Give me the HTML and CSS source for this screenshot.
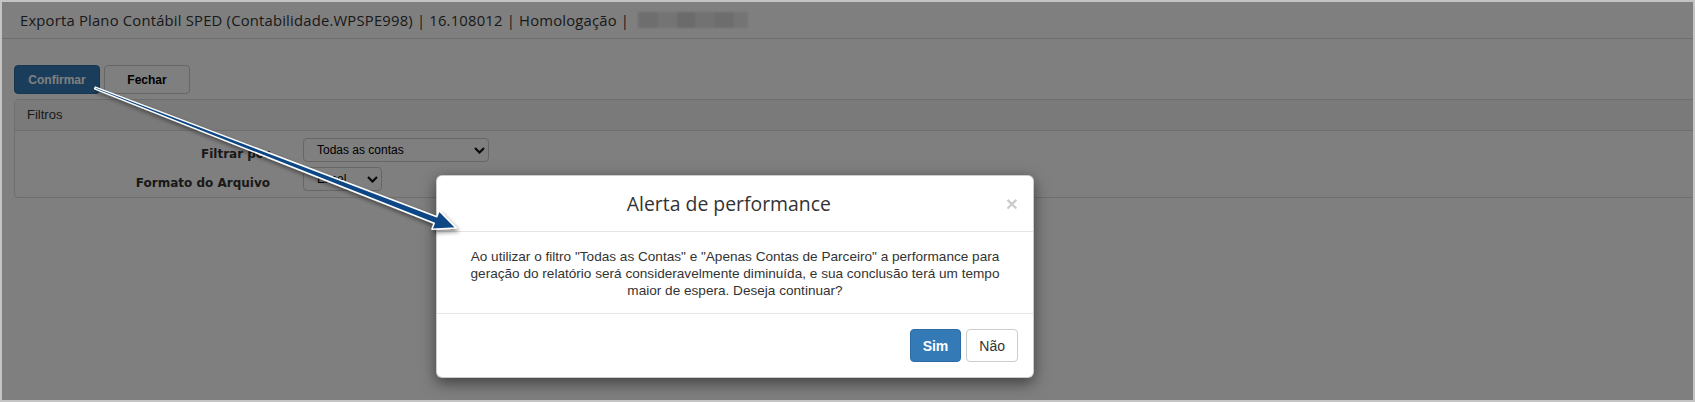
FILE: index.html
```html
<!DOCTYPE html>
<html lang="pt-BR">
<head>
    <meta charset="UTF-8">
    <title>Exporta Plano Contábil SPED</title>
    <link rel="stylesheet" href="styles.css">
</head>
<body>
    <div class="frame">
        <div class="topbar">
            <span class="page-title">Exporta Plano Contábil SPED (Contabilidade.WPSPE998) | 16.108012 | Homologação |</span>
            <span class="redacted"></span>
        </div>
        <div class="toolbar">
            <button type="button" class="btn btn-primary">Confirmar</button>
            <button type="button" class="btn">Fechar</button>
        </div>
        <div class="panel">
            <div class="panel-heading">Filtros</div>
            <div class="panel-body">
                <label class="field-label">Filtrar por</label>
                <div class="select select-wide">
                    <span>Todas as contas</span>
                    <svg width="11" height="7" viewBox="0 0 11 7"><path d="M1 1l4.5 4.5L10 1" fill="none" stroke="#111" stroke-width="2.2"/></svg>
                </div>
                <label class="field-label">Formato do Arquivo</label>
                <div class="select select-small">
                    <span>Excel</span>
                    <svg width="11" height="7" viewBox="0 0 11 7"><path d="M1 1l4.5 4.5L10 1" fill="none" stroke="#111" stroke-width="2.2"/></svg>
                </div>
            </div>
        </div>
        <div class="backdrop"></div>
    </div>

    <div class="modal">
        <div class="modal-header">
            <span class="close">&times;</span>
            <h4 class="modal-title">Alerta de performance</h4>
        </div>
        <div class="modal-body">
            Ao utilizar o filtro "Todas as Contas" e "Apenas Contas de Parceiro" a performance para<br>
            geração do relatório será consideravelmente diminuída, e sua conclusão terá um tempo<br>
            maior de espera. Deseja continuar?
        </div>
        <div class="modal-footer">
            <button type="button" class="mbtn mbtn-primary">Sim</button>
            <button type="button" class="mbtn">Não</button>
        </div>
    </div>

    <!-- annotation arrow drawn over the screenshot -->
    <svg class="arrow" width="1695" height="402" viewBox="0 0 1695 402">
        <defs>
            <filter id="shadow" x="-10%" y="-10%" width="130%" height="140%">
                <feDropShadow dx="2" dy="3" stdDeviation="2" flood-color="#000" flood-opacity="0.45"/>
            </filter>
        </defs>
        <polygon filter="url(#shadow)" fill="#0d4785" stroke="#fff" stroke-width="1.5" stroke-linejoin="round"
            points="95.4,87.1 436.8,216.7 439.1,210.7 456,228 431.9,229.3 434.2,223.3 94.6,88.9"/>
    </svg>
</body>
</html>
```

FILE: styles.css
```css
body {
    margin: 0;
    position: relative;
    width: 1695px;
    height: 402px;
    overflow: hidden;
    font-family: "Liberation Sans", Arial, sans-serif;
    color: #333;
}
.frame {
    position: relative;
    box-sizing: border-box;
    height: 402px;
    border: 2px solid #c4c4c4;
    background: #fff;
    overflow: hidden;
}
.topbar {
    height: 36px;
    border-bottom: 1px solid #dcdcdc;
    display: flex;
    align-items: center;
    padding-left: 18px;
    font-family: "Open Sans", sans-serif;
    font-size: 14.8px;
    letter-spacing: 0.2px;
}
.redacted {
    display: inline-block;
    width: 110px;
    height: 16px;
    margin-left: 9px;
    background:
        linear-gradient(90deg, #dcdcdc 0 18%, #e9e9e9 18% 35%, #d6d6d6 35% 52%, #e4e4e4 52% 70%, #dadada 70% 86%, #e8e8e8 86%);
    filter: blur(1px);
}
.toolbar {
    display: flex;
    gap: 4px;
    padding: 26px 0 0 12px;
}
.btn {
    width: 86px;
    height: 29px;
    border: 1px solid #ccc;
    border-radius: 4px;
    background: #fff;
    color: #000;
    font-family: "Liberation Sans", Arial, sans-serif;
    font-size: 12px;
    font-weight: bold;
    padding: 0;
}
.btn-primary {
    background: #337ab7;
    border-color: #2e6da4;
    color: #fff;
}
.panel {
    margin: 5px -20px 0 12px;
    border: 1px solid #ddd;
    border-radius: 4px;
}
.panel-heading {
    height: 30px;
    line-height: 30px;
    padding-left: 12px;
    background: #f5f5f5;
    border-bottom: 1px solid #ddd;
    font-size: 13px;
}
.panel-body {
    display: grid;
    grid-template-columns: 255px auto;
    column-gap: 33px;
    row-gap: 5px;
    justify-content: start;
    padding: 7px 0 6px;
}
.field-label {
    text-align: right;
    padding-top: 8px;
    line-height: 16px;
    font-family: "DejaVu Sans", Verdana, sans-serif;
    font-size: 12px;
    font-weight: bold;
}
.select {
    box-sizing: border-box;
    height: 24px;
    display: flex;
    align-items: center;
    justify-content: space-between;
    padding: 0 3px 0 13px;
    border: 1px solid #ccc;
    border-radius: 4px;
    background: #fff;
    color: #000;
    font-size: 12px;
}
.select-wide {
    width: 186px;
}
.select-small {
    width: 79px;
}
.backdrop {
    position: absolute;
    inset: 0;
    background: rgba(0, 0, 0, 0.5);
}
.modal {
    position: absolute;
    left: 436px;
    top: 175px;
    width: 598px;
    box-sizing: border-box;
    background: #fff;
    border: 1px solid rgba(0, 0, 0, 0.2);
    border-radius: 6px;
    box-shadow: 0 5px 15px rgba(0, 0, 0, 0.5);
}
.modal-header {
    padding: 15px;
    border-bottom: 1px solid #e5e5e5;
}
.modal-title {
    margin: 0;
    font-family: "Open Sans", sans-serif;
    font-size: 19.4px;
    font-weight: normal;
    line-height: 25px;
    text-align: center;
}
.close {
    float: right;
    margin-top: 2px;
    font-size: 21px;
    font-weight: bold;
    line-height: 1;
    color: #000;
    opacity: 0.2;
}
.modal-body {
    padding: 16px 15px 14px;
    font-size: 13.6px;
    line-height: 17px;
    text-align: center;
    white-space: nowrap;
}
.modal-footer {
    display: flex;
    justify-content: flex-end;
    gap: 5px;
    padding: 15px;
    border-top: 1px solid #e5e5e5;
}
.mbtn {
    height: 33px;
    padding: 6px 12px;
    border: 1px solid #ccc;
    border-radius: 4px;
    background: #fff;
    color: #333;
    font-family: "Liberation Sans", Arial, sans-serif;
    font-size: 14px;
}
.mbtn-primary {
    background: #337ab7;
    border-color: #2e6da4;
    color: #fff;
    font-weight: bold;
}
.arrow {
    position: absolute;
    left: 0;
    top: 0;
    pointer-events: none;
}
```
